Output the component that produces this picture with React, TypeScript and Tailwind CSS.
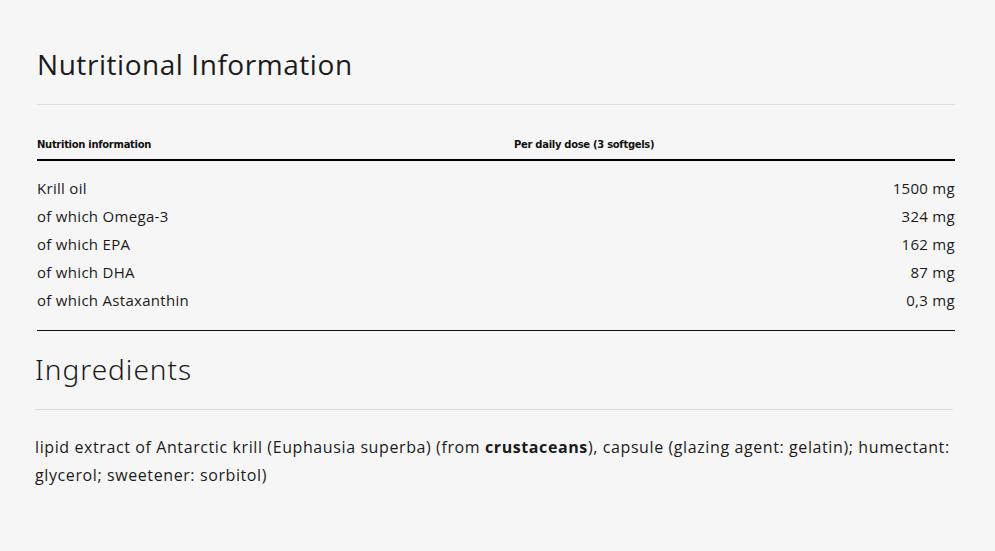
const rows = [
  { name: "Krill oil", value: "1500 mg" },
  { name: "of which Omega-3", value: "324 mg" },
  { name: "of which EPA", value: "162 mg" },
  { name: "of which DHA", value: "87 mg" },
  { name: "of which Astaxanthin", value: "0,3 mg" },
];

export default function App() {
  return (
    <div className="min-h-screen bg-[#f6f6f6] text-[#1b1b1b] font-['Open_Sans',sans-serif]">
      {/* Nutritional information */}
      <section className="ml-[37px] w-[918px]">
        <h2 className="pt-[47px] pb-[23px] border-b border-[#dcdcdc] text-[28px] leading-[34px] font-normal tracking-[0.55px]">
          Nutritional Information
        </h2>

        <div className="border-b border-[#111]">
          <div className="flex pt-[33px] pb-[8px] border-b-2 border-black font-['DejaVu_Sans',sans-serif] font-bold text-[10px] leading-[13px] tracking-[-0.3px] text-[#111]">
            <div className="w-[477px]">Nutrition information</div>
            <div>Per daily dose (3 softgels)</div>
          </div>

          <div className="pt-[13px] pb-[16px]">
            {rows.map((row) => (
              <div
                key={row.name}
                className="flex justify-between h-[28px] items-center text-[15px] tracking-[0.3px]"
              >
                <span>{row.name}</span>
                <span>{row.value}</span>
              </div>
            ))}
          </div>
        </div>
      </section>

      {/* Ingredients */}
      <section className="ml-[35px] w-[918px]">
        <h2 className="mt-[21px] pb-[23px] border-b border-[#dcdcdc] text-[28px] leading-[34px] font-light tracking-[1px] font-['Noto_Sans',sans-serif]">
          Ingredients
        </h2>
        <p className="mt-[23px] text-[16px] leading-[28px] tracking-[0.6px]">
          lipid extract of Antarctic krill (Euphausia superba) (from{" "}
          <strong className="font-bold">crustaceans</strong>), capsule (glazing
          agent: gelatin); humectant: glycerol; sweetener: sorbitol)
        </p>
      </section>
    </div>
  );
}
